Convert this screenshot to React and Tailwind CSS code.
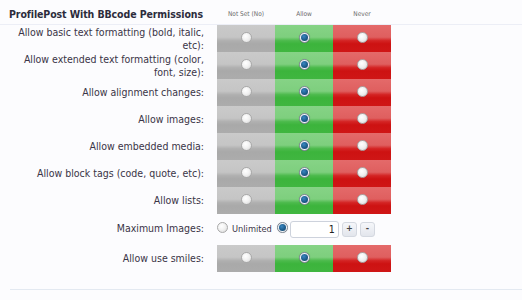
import React from "react";

const FONT = "font-['DejaVu_Sans_Condensed','DejaVu_Sans',sans-serif]";

function Radio({ checked }) {
  if (checked) {
    return (
      <span className="flex items-center justify-center w-[11px] h-[11px] rounded-full border border-[#7d8794] bg-[#f4f6f8] shadow-[0_0_1px_rgba(0,0,0,0.2)]">
        <span className="w-[7px] h-[7px] rounded-full bg-[radial-gradient(circle_at_40%_35%,#3a86c0_0%,#1d5c8c_55%,#123e62_100%)]" />
      </span>
    );
  }
  return (
    <span className="block w-[11px] h-[11px] rounded-full border border-[#a9a9a9] bg-[radial-gradient(circle_at_40%_35%,#ffffff_0%,#f2f2f2_45%,#d6d6d6_100%)]" />
  );
}

const GREY = "bg-[linear-gradient(to_bottom,#cacaca_0%,#c5c5c5_45%,#b0b0b0_58%,#a9a9a9_70%,#acacac_100%)]";
const GREEN = "bg-[linear-gradient(to_bottom,#86d386_0%,#7ecf7e_45%,#4cba4c_58%,#3cb43c_70%,#40b640_100%)]";
const RED = "bg-[linear-gradient(to_bottom,#e46a6a_0%,#df5f5f_45%,#d42424_58%,#cd1212_70%,#cf1616_100%)]";

function Cells() {
  return (
    <div className="flex h-full">
      <div className={`w-[58px] h-full flex items-center justify-center pb-[3px] ${GREY}`}>
        <Radio />
      </div>
      <div className={`w-[58px] h-full flex items-center justify-center pb-[3px] ${GREEN}`}>
        <Radio checked />
      </div>
      <div className={`w-[58px] h-full flex items-center justify-center pb-[3px] ${RED}`}>
        <Radio />
      </div>
    </div>
  );
}

function Row({ children }) {
  return (
    <div className="flex h-[27px]">
      <div className="w-[217px] pr-[13px] flex items-center justify-end text-right text-[10.5px] leading-[13px] text-[#3a3446] whitespace-nowrap">
        <span>{children}</span>
      </div>
      <Cells />
    </div>
  );
}

export default function App() {
  return (
    <div className={`w-[522px] h-[300px] bg-[#fcfcfe] ${FONT} overflow-hidden`}>
      <div className="flex items-center h-[25px] pt-[6px] border-b border-[#eceef6]">
        <div className="w-[217px] pl-[9px] text-[10.5px] tracking-[-0.1px] font-bold text-[#2c2c3c] whitespace-nowrap">
          ProfilePost With BBcode Permissions
        </div>
        <div className="w-[58px] text-center text-[6.5px] text-[#6a6a6a] whitespace-nowrap">Not Set (No)</div>
        <div className="w-[58px] text-center text-[6.5px] text-[#6a6a6a]">Allow</div>
        <div className="w-[58px] text-center text-[6.5px] text-[#6a6a6a]">Never</div>
      </div>

      <Row>
        Allow basic text formatting (bold, italic,
        <br />
        etc):
      </Row>
      <Row>
        Allow extended text formatting (color,
        <br />
        font, size):
      </Row>
      <Row>Allow alignment changes:</Row>
      <Row>Allow images:</Row>
      <Row>Allow embedded media:</Row>
      <Row>Allow block tags (code, quote, etc):</Row>
      <Row>Allow lists:</Row>

      <div className="flex h-[30px] items-center">
        <div className="w-[217px] pr-[13px] text-right text-[10.5px] text-[#3a3446] whitespace-nowrap">
          Maximum Images:
        </div>
        <div className="flex items-center">
          <span className="mb-[3px]"><Radio /></span>
          <span className="ml-[4px] text-[9.2px] text-[#3a3446]">Unlimited</span>
          <span className="ml-[5px] mb-[4px]"><Radio checked /></span>
          <div className="ml-[2px] w-[49px] h-[17px] border border-[#cdd2dc] rounded-[3px] bg-white text-right pr-[3px] text-[10.5px] leading-[15px] text-[#222]">
            1
          </div>
          <div className="ml-[3px] w-[15px] h-[15px] rounded-[3px] border border-[#d4d8e0] bg-[linear-gradient(to_bottom,#f6f7fa,#e2e5ec)] flex items-center justify-center text-[9px] font-bold text-[#444]">
            +
          </div>
          <div className="ml-[3px] w-[15px] h-[15px] rounded-[3px] border border-[#d4d8e0] bg-[linear-gradient(to_bottom,#f6f7fa,#e2e5ec)] flex items-center justify-center text-[9px] font-bold text-[#444]">
            -
          </div>
        </div>
      </div>

      <div className="mt-[1px]">
        <Row>Allow use smiles:</Row>
      </div>

      <div className="ml-[10px] mt-[17px] border-t border-[#e3e9f1]" />
    </div>
  );
}
